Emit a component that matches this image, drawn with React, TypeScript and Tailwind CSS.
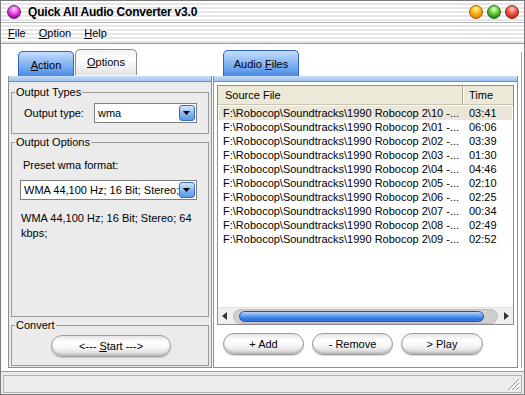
import React from 'react';

const files = [
  ['10', '03:41'],
  ['01', '06:06'],
  ['02', '03:39'],
  ['03', '01:30'],
  ['04', '04:46'],
  ['05', '02:10'],
  ['06', '02:25'],
  ['07', '00:34'],
  ['08', '02:49'],
  ['09', '02:52'],
];

function Ball({ tone }: { tone: 'orange' | 'green' | 'red' | 'pink' }) {
  const cls = {
    orange:
      'bg-[radial-gradient(circle_at_50%_28%,#fff2b0_0%,#ffc21a_35%,#f08a00_70%,#b05a00_100%)] border-[#a0601a]',
    green:
      'bg-[radial-gradient(circle_at_50%_28%,#e4ffc0_0%,#7ed84a_35%,#2f9c18_70%,#1a6410_100%)] border-[#2d6a1a]',
    red:
      'bg-[radial-gradient(circle_at_50%_28%,#ffd0c8_0%,#f46a5a_35%,#d42a1a_70%,#8a1010_100%)] border-[#8a2a20]',
    pink:
      'bg-[radial-gradient(circle_at_50%_28%,#ffd8ff_0%,#f060f0_35%,#b010b0_70%,#600060_100%)] border-[#702070]',
  }[tone];
  return <div className={`w-[14px] h-[14px] rounded-full border ${cls}`} />;
}

function DropButton() {
  return (
    <div className="w-[16px] h-[16px] shrink-0 rounded-[3px] border border-[#3a6cc0] bg-[linear-gradient(to_bottom,#d6e8fd,#8ab8f4_50%,#5d97e8)] flex items-center justify-center">
      <svg width="8" height="5" viewBox="0 0 8 5">
        <path d="M0 0h7L3.5 4z" fill="#000" />
      </svg>
    </div>
  );
}

function Combo({ text, className }: { text: string; className: string }) {
  return (
    <div
      className={`h-[20px] bg-white border border-[#7f7f7f] flex items-center pl-[3px] pr-[1px] ${className}`}
    >
      <span className="flex-1 whitespace-nowrap">{text}</span>
      <DropButton />
    </div>
  );
}

function PillButton({ children, className }: { children: React.ReactNode; className: string }) {
  return (
    <div
      className={`h-[22px] rounded-[11px] border border-[#9c9c9c] bg-[linear-gradient(to_bottom,#e4e4e4_0%,#ffffff_30%,#f6f6f6_60%,#d2d2d2_100%)] shadow-[inset_0_-2px_2px_rgba(0,0,0,0.12),0_1px_1px_rgba(0,0,0,0.15)] flex items-center justify-center ${className}`}
    >
      {children}
    </div>
  );
}

const stripes =
  'bg-[repeating-linear-gradient(to_bottom,#ffffff_0px,#ffffff_2px,#e6e6e6_2px,#e6e6e6_4px)]';

export default function App() {
  return (
    <div className="w-[525px] h-[395px] flex flex-col border border-[#7c7c7c] bg-[#ececec] font-['Liberation_Sans',Arial,sans-serif] text-[11px] text-black overflow-hidden">
      {/* title bar */}
      <div className={`h-[22px] flex items-center pl-[6px] pr-[5px] border-b border-[#b4b4b4] ${stripes}`}>
        <Ball tone="pink" />
        <span className="ml-[7px] text-[12px] font-bold tracking-[-0.2px]">
          Quick All Audio Converter v3.0
        </span>
        <div className="ml-auto flex gap-[4px]">
          <Ball tone="orange" />
          <Ball tone="green" />
          <Ball tone="red" />
        </div>
      </div>

      {/* menu */}
      <div className={`h-[20px] flex items-center gap-[13px] pl-[7px] ${stripes}`}>
        <span>
          <u>F</u>ile
        </span>
        <span>
          <u>O</u>ption
        </span>
        <span>
          <u>H</u>elp
        </span>
      </div>

      {/* main */}
      <div className="flex-1 flex bg-white border-t border-[#9c9c9c] pl-[7px] pt-[4px] pb-[3px]">
        {/* left column */}
        <div className="w-[204px] flex flex-col">
          <div className="h-[28px] flex items-end pl-[10px]">
            <div className="w-[56px] h-[25px] rounded-t-[5px] border border-b-0 border-[#2f62c4] bg-[linear-gradient(to_bottom,#c4defc,#7fb1f2_55%,#4c8ce6)] flex items-center justify-center">
              <span className="mt-[2px]">
                <u>A</u>ction
              </span>
            </div>
            <div className="ml-[1px] mb-[1px] w-[62px] h-[26px] rounded-t-[5px] border border-b-0 border-[#8e8e8e] bg-[linear-gradient(to_bottom,#f2f2f2,#ffffff_40%,#e2e2e2)] flex items-center justify-center">
              <span>
                <u>O</u>ptions
              </span>
            </div>
          </div>
          <div className="flex-1 flex flex-col border-x border-b border-[#8e8e8e] bg-[#ebebeb]">
            <div className="h-[6px] border-b border-[#8a8a8a] bg-[linear-gradient(to_bottom,#c9def8,#9ec3f1)]" />
            <div className="flex-1 flex flex-col px-[2px] pt-[4px] pb-[1px] gap-[2px]">
              <fieldset className="border border-[#9a9a9a] pb-[10px]">
                <legend className="ml-[3px] px-[1px] leading-[13px]">Output Types</legend>
                <div className="flex items-center mt-[4px] pl-[12px]">
                  <span className="w-[70px]">Output type:</span>
                  <Combo text="wma" className="w-[103px]" />
                </div>
              </fieldset>
              <fieldset className="flex-1 border border-[#9a9a9a]">
                <legend className="ml-[3px] px-[1px] leading-[13px]">Output Options</legend>
                <div className="pl-[11px] mt-[10px] leading-[13px]">Preset wma format:</div>
                <Combo text="WMA 44,100 Hz; 16 Bit; Stereo;" className="ml-[8px] mt-[8px] w-[177px]" />
                <div className="pl-[9px] mt-[11px] leading-[15px]">
                  WMA 44,100 Hz; 16 Bit; Stereo; 64
                  <br />
                  kbps;
                </div>
              </fieldset>
              <fieldset className="border border-[#9a9a9a] pb-[8px]">
                <legend className="ml-[3px] px-[1px] leading-[13px]">Convert</legend>
                <PillButton className="mt-[3px] ml-[39px] w-[120px]">
                  <span>
                    &lt;--- <u>S</u>tart ---&gt;
                  </span>
                </PillButton>
              </fieldset>
            </div>
          </div>
        </div>

        {/* right column */}
        <div className="ml-[1px] w-[305px] flex flex-col">
          <div className="h-[28px] flex items-end pl-[10px]">
            <div className="w-[76px] h-[26px] rounded-t-[5px] border border-b-0 border-[#2f62c4] bg-[linear-gradient(to_bottom,#c4defc,#7fb1f2_55%,#4c8ce6)] flex items-center justify-center">
              <span className="mt-[1px]">
                Audio <u>F</u>iles
              </span>
            </div>
          </div>
          <div className="flex-1 flex flex-col border-x border-b border-[#8e8e8e] bg-white">
            <div className="h-[6px] border-b border-[#8a8a8a] bg-[linear-gradient(to_bottom,#c9def8,#9ec3f1)]" />
            <div className="px-[3px] pt-[3px]">
              <div className="h-[240px] flex flex-col border border-[#8c8c8c] bg-white">
                <div className="h-[19px] flex bg-[#ece9d8] border-b border-[#c9c5b2] shrink-0">
                  <div className="w-[245px] pl-[7px] flex items-center border-r border-[#aca899] shadow-[1px_0_0_#ffffff]">
                    Source File
                  </div>
                  <div className="flex-1 pl-[6px] flex items-center">Time</div>
                </div>
                <div className="flex-1 pt-[1px] px-[1px]">
                  {files.map(([n, t], i) => (
                    <div
                      key={n}
                      className={`h-[14px] flex items-center ${i === 0 ? 'bg-[#ebe7d8]' : ''}`}
                    >
                      <span className="w-[250px] pl-[4px] whitespace-nowrap">
                        F:\Robocop\Soundtracks\1990 Robocop 2\{n} -...
                      </span>
                      <span>{t}</span>
                    </div>
                  ))}
                </div>
                {/* horizontal scrollbar */}
                <div className="h-[17px] shrink-0 flex items-center bg-[#efefef] border-t border-[#e0e0e0] px-[4px]">
                  <svg width="6" height="8" viewBox="0 0 6 8" className="mr-[5px]">
                    <path d="M5 0v8L0 4z" fill="#333" />
                  </svg>
                  <div className="flex-1 h-[15px] rounded-full bg-[#cfcfcf] border border-[#bdbdbd] flex items-center pl-[5px] pr-[13px]">
                    <div className="flex-1 h-[11px] rounded-full border border-[#1e4fb4] bg-[linear-gradient(to_bottom,#b8d6fb,#5f9cf0_45%,#2c6fde_80%,#3c7ae2)]" />
                  </div>
                  <svg width="6" height="8" viewBox="0 0 6 8" className="ml-[5px]">
                    <path d="M1 0v8L6 4z" fill="#333" />
                  </svg>
                </div>
              </div>
            </div>
            <div className="flex gap-[8px] pl-[9px] mt-[8px]">
              <PillButton className="w-[81px]">+ Add</PillButton>
              <PillButton className="w-[81px]">- Remove</PillButton>
              <PillButton className="w-[82px]">&gt; Play</PillButton>
            </div>
          </div>
        </div>
        <div className="ml-[3px] mt-[4px] w-px bg-[#a4a4a4]" />
      </div>

      {/* status bar */}
      <div className="h-[23px] border-t border-[#9c9c9c] bg-[#ececec] px-[2px] pt-[3px] pb-[1px] flex">
        <div className="flex-1 border border-[#b4b4b4] relative">
          <svg width="14" height="14" viewBox="0 0 14 14" className="absolute right-[1px] bottom-[1px]">
            <path d="M13 2L2 13M13 6L6 13M13 10L10 13" stroke="#8a9ab8" strokeWidth="1" />
            <path d="M14 3L3 14M14 7L7 14M14 11L11 14" stroke="#ffffff" strokeWidth="1" />
          </svg>
        </div>
      </div>
    </div>
  );
}
